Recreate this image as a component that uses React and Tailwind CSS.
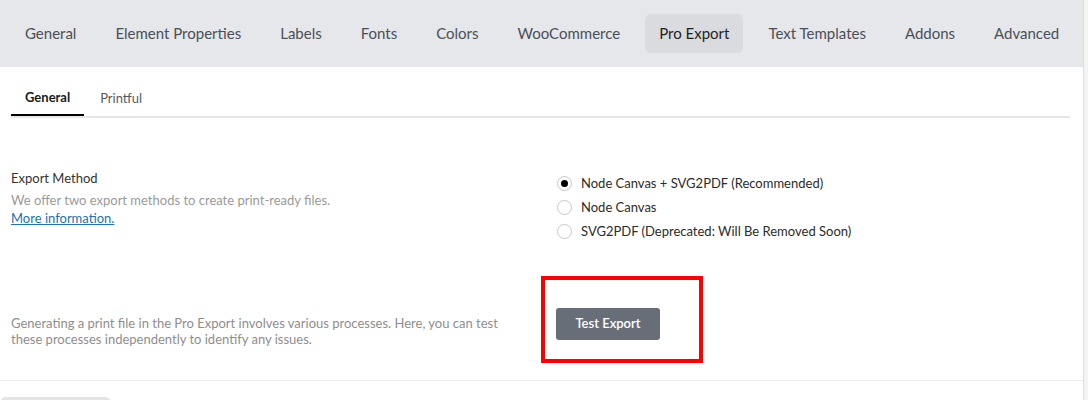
import React, { useState } from 'react';

const topTabs = ['General', 'Element Properties', 'Labels', 'Fonts', 'Colors', 'WooCommerce', 'Pro Export', 'Text Templates', 'Addons', 'Advanced'];

const methods = [
    'Node Canvas + SVG2PDF (Recommended)',
    'Node Canvas',
    'SVG2PDF (Deprecated: Will Be Removed Soon)'
];

export default function App() {
    const [method, setMethod] = useState(0);

    return (
        <div className="flex w-[1088px] h-[400px] overflow-hidden bg-white font-['Lato','Noto_Sans',sans-serif]">
            <div className="w-[1083px] shrink-0 flex flex-col">
                {/* main tabs */}
                <div className="shrink-0 h-[67px] bg-[#e5e7eb] flex items-center px-[11px] gap-[11px] overflow-hidden">
                    {topTabs.map((t) => (
                        <button
                            key={t}
                            className={
                                t === 'Pro Export'
                                    ? 'shrink-0 whitespace-nowrap h-[39px] px-[14px] rounded-md bg-[#d9dbdf] text-[15px] text-[#1f1f1f]'
                                    : 'shrink-0 whitespace-nowrap h-[39px] px-[14px] rounded-md text-[15px] text-[#4b4f56]'
                            }
                        >
                            {t}
                        </button>
                    ))}
                </div>

                <div className="shrink-0 px-[11px]">
                    {/* sub tabs */}
                    <div className="flex border-b-2 border-[#e5e7eb] mt-[15px] w-[1059px]">
                        <button className="px-[14px] h-[34px] -mb-[2px] border-b-2 border-black text-[13px] font-bold text-[#1a1a1a]">
                            General
                        </button>
                        <button className="px-[14px] h-[34px] ml-[2px] text-[13px] text-[#555a61]">
                            Printful
                        </button>
                    </div>

                    {/* export method */}
                    <div className="grid grid-cols-[530px_1fr] gap-[15px] mt-[51px]">
                        <div className="text-[13px] leading-[18px]">
                            <div className="text-[#333]">Export Method</div>
                            <div className="text-[#9a9a9a] mt-[4px]">We offer two export methods to create print-ready files.</div>
                            <a href="#" className="text-[#2271b1] underline">More information.</a>
                        </div>
                        <div className="flex flex-col gap-[6px] pt-[5px]">
                            {methods.map((m, i) => (
                                <label key={m} className="flex items-center gap-[9px] cursor-pointer text-[13px] leading-[18px] text-[#2b2b2b]" onClick={() => setMethod(i)}>
                                    <span className="w-[15px] h-[15px] ml-[1px] rounded-full border border-[#c8c8c8] bg-white flex items-center justify-center">
                                        {method === i && <span className="w-[7px] h-[7px] rounded-full bg-black" />}
                                    </span>
                                    {m}
                                </label>
                            ))}
                        </div>
                    </div>

                    {/* test export */}
                    <div className="grid grid-cols-[530px_1fr] gap-[15px] mt-[68px]">
                        <div className="max-w-[500px] text-[13px] leading-[16px] text-[#8e8e8e] pt-[7px]">
                            Generating a print file in the Pro Export involves various processes. Here, you can test these processes independently to identify any issues.
                        </div>
                        <div>
                            <div className="relative inline-block">
                                <button className="w-[104px] h-[32px] rounded-[3px] bg-[#686e78] text-white text-[13px] font-semibold">
                                    Test Export
                                </button>
                                <div className="absolute left-[-15px] top-[-32px] w-[162px] h-[87px] border-[4px] border-[#ff0000] pointer-events-none" />
                            </div>
                        </div>
                    </div>
                </div>

                <div className="shrink-0 mt-[33px] border-t border-[#ececec]" />
                <div className="shrink-0 mt-[16px] w-[111px] h-[10px] rounded-t-md bg-[#e4e4e4]" />
            </div>
            <div className="flex-1 bg-[#f4f4f4] border-l border-[#dedede]" />
        </div>
    );
}
